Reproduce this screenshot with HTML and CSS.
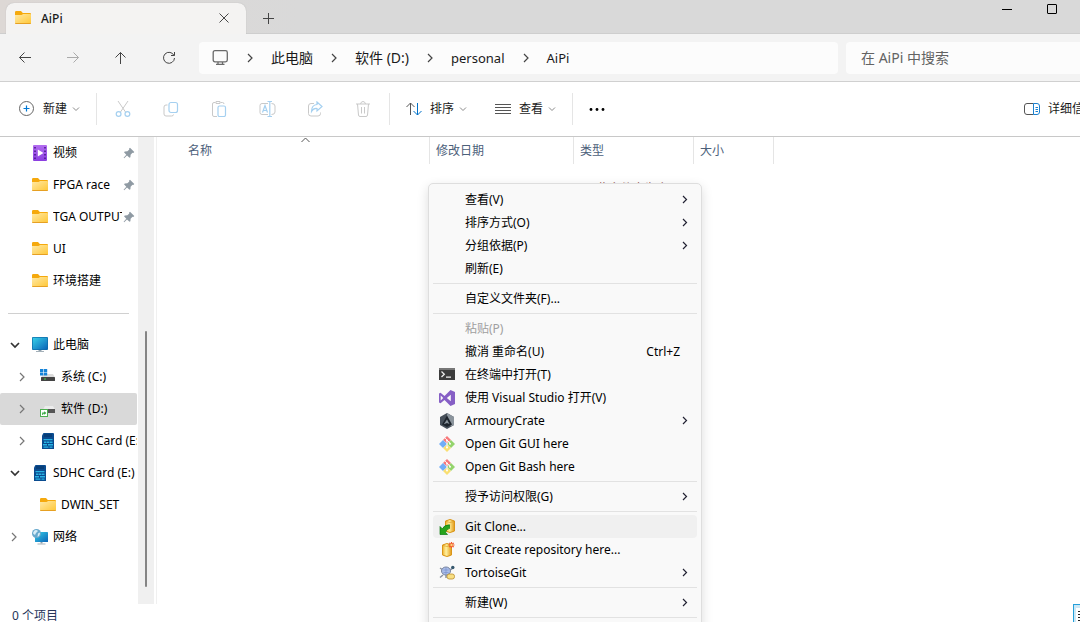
FILE: index.html
```html
<!DOCTYPE html>
<html lang="zh-CN">
<head>
<meta charset="utf-8">
<title>AiPi</title>
<link rel="stylesheet" href="styles.css">
</head>
<body>
<svg class="defs" aria-hidden="true">
  <defs>
    <linearGradient id="gFolder" x1="0" y1="0" x2="1" y2="1"><stop offset="0" stop-color="#ffe9a6"/><stop offset="1" stop-color="#ffc736"/></linearGradient>
    <linearGradient id="gScreen" x1="0" y1="0" x2="1" y2="1"><stop offset="0" stop-color="#37d0e8"/><stop offset="1" stop-color="#0a64b8"/></linearGradient>
    <linearGradient id="gVideo" x1="0" y1="0" x2="0" y2="1"><stop offset="0" stop-color="#b36df0"/><stop offset="1" stop-color="#8a3ee0"/></linearGradient>
    <linearGradient id="gGold" x1="0" y1="0" x2="1" y2="0"><stop offset="0" stop-color="#efb02a"/><stop offset=".4" stop-color="#fff2a0"/><stop offset="1" stop-color="#e39a18"/></linearGradient>
  </defs>
  <symbol id="folder" viewBox="0 0 16 16"><path d="M0 2.200Q0 1 1.200 1H6L7.800 3H15Q16 3 16 4V8H0z" fill="#f5a90d"/><path d="M0 5H6.500L8.200 4H15.200Q16 4 16 4.800V13Q16 13.800 15.200 13.800H.8Q0 13.800 0 13z" fill="url(#gFolder)"/><path d="M0 13H16Q16 14 15 14H1Q0 14 0 13z" fill="#e6a023"/></symbol>
  <symbol id="video" viewBox="0 0 16 16"><rect x="1" width="14" height="16" rx="1" fill="url(#gVideo)"/><path d="M2.200 2h1.600v1.600H2.200zM2.200 5.500h1.600v1.600H2.200zM2.200 9h1.600v1.600H2.200zM2.200 12.500h1.600v1.600H2.200zM12.200 2h1.600v1.600h-1.600zM12.200 5.500h1.600v1.600h-1.600zM12.200 9h1.600v1.600h-1.600zM12.200 12.500h1.600v1.600h-1.600z" fill="#4a1a8c"/><path d="M5.800 4.500 11.500 8 5.800 11.500z" fill="#fff"/></symbol>
  <symbol id="pin" viewBox="0 0 12 12"><path d="M7 .8 11.300 5 10.300 6 9.500 5.800 7.600 7.700 7.400 10.200 6.500 10.800 4 8.500 1.200 11.200.6 10.700 3.300 7.800 1 5.300 1.800 4.500 4.400 4.300 6.300 2.400 6.100 1.600z" fill="#8f9aa3"/></symbol>
  <symbol id="pc" viewBox="0 0 16 16"><path d="M6.500 12h3v2.500h-3z" fill="#8fa0ac"/><path d="M4 14h8v1H4z" fill="#a4b0b8"/><rect y="0" width="16" height="13" rx="1" fill="#0c6aa8"/><rect x=".7" y=".7" width="14.600" height="11.600" fill="url(#gScreen)"/></symbol>
  <symbol id="drive" viewBox="0 0 16 16"><path d="M3.500 5H13L15 8.500H1z" fill="#dcdcdc"/><rect x="1" y="8" width="14" height="4" rx=".6" fill="#444"/><path d="M4 9.500h2v1H4z" fill="#43d64c"/></symbol>
  <symbol id="driveC" viewBox="0 0 16 16"><use href="#drive"/><path d="M0 0h3.300v3H0zM3.900 0h3.300v3H3.900zM0 3.600h3.300v3H0zM3.900 3.600h3.300v3H3.900z" fill="#1583d8"/></symbol>
  <symbol id="driveD" viewBox="0 0 16 16"><path d="M5 5H13L15 8.500H3z" fill="#ececec"/><rect x="5" y="8" width="10" height="4" fill="#555"/><rect x=".5" y="8.500" width="7" height="7" fill="#fff" stroke="#4caf50"/><path d="M2.200 14V11.600H4.200V10.200L6.400 12 4.200 13.700V12.700H3.200V14z" fill="#30a53c"/></symbol>
  <symbol id="sd" viewBox="0 0 16 16"><path d="M3.500 0H13.500L14 .5V16H2V2.500z" fill="#0a4b8f"/><path d="M5 1v3M7 1v3M9 1v3M11 1v3" stroke="#073263"/><path d="M3.500 6h9v1.300h-9zM4 8.500h2.500v1.500H4zM7 8.500h2.500v1.500H7zM10 8.500h2.500v1.500H10zM3 11h4v1.400H3zM8 11h5v1.400H8zM3.500 13.500h5v1.300h-5zM9.500 13.500h3v1.300h-3z" fill="#28b4e4"/></symbol>
  <symbol id="net" viewBox="0 0 16 16"><path d="M8.500 12.500h2v2h-2z" fill="#8fa0ac"/><path d="M5.500 14.500h8v1h-8z" fill="#a4b0b8"/><rect x="3" y="3" width="13" height="10" rx=".6" fill="url(#gScreen)"/><circle cx="4.500" cy="4.500" r="4.500" fill="#68a9cd"/><path d="M2 2Q4 0 6 2L4 4 3 6Q1 5 1 4zM6 4.500 8 3.500Q8 7 5.500 8z" fill="#d7edf7"/></symbol>
  <symbol id="down" viewBox="0 0 8 8"><path d="M1 2.500 4 5.500 7 2.500" fill="none" stroke="#8a8a8a"/></symbol>
  <symbol id="right" viewBox="0 0 8 12"><path d="M2 2 6 6 2 10" fill="none" stroke="currentColor" stroke-width="1.200"/></symbol>
  <symbol id="small" viewBox="0 0 8 12"><path d="M2 2 5.500 5.500 2 9" fill="none" stroke="currentColor" stroke-width="1.200"/></symbol>
  <symbol id="caret" viewBox="0 0 10 10"><path d="M1 3 5 7 9 3" fill="none" stroke="#333" stroke-width="1.700"/></symbol>
  <symbol id="git" viewBox="0 0 16 16"><path d="M8 0 12 4 8 7.500 4 4z" fill="#f8797b"/><path d="M4 4 8 8 4 12 0 8z" fill="#72adf7"/><path d="M12 4 16 8 12 12 8 8z" fill="#94d46c"/><path d="M8 8.500 12 12 8 16 4 12z" fill="#f9df72"/><path d="M5.800 1.800 11 7M8 4.500V11.500" stroke="#fafafa" stroke-width=".9" fill="none"/><circle cx="8" cy="4.500" r=".9" fill="#fff"/><circle cx="11" cy="7.800" r="1" fill="#fff"/><circle cx="8" cy="11.500" r="1" fill="#fff"/></symbol>
  <symbol id="barrel" viewBox="0 0 10 14"><path d="M.5 2Q5-1 9.500 2V12Q5 15 .5 12z" fill="url(#gGold)" stroke="#d9951a"/><path d="M1 2.500Q5 4.500 9 2.500" fill="none" stroke="#d9951a" stroke-width=".6"/></symbol>
</svg>

<div class="window">
  <header class="titlebar">
    <div class="tab">
      <svg class="i16"><use href="#folder"/></svg>
      <span class="tab-title">AiPi</span>
      <button class="plain tab-close" aria-label="关闭标签页"><svg width="10" height="10" viewBox="0 0 10 10"><path d="M.5.5 9.500 9.500M9.500.5.5 9.500" stroke="#333" stroke-width=".9"/></svg></button>
    </div>
    <button class="plain tab-new" aria-label="新标签页"><svg width="11" height="11" viewBox="0 0 11 11"><path d="M5.500 0V11M0 5.500H11" stroke="#444"/></svg></button>
    <div class="caption">
      <button class="plain" aria-label="最小化"><svg width="10" height="10" viewBox="0 0 10 10"><path d="M0 5.500H10" stroke="#000"/></svg></button>
      <button class="plain" aria-label="最大化"><svg width="10" height="10" viewBox="0 0 10 10"><rect x=".5" y=".5" width="9" height="9" rx=".5" fill="none" stroke="#000"/></svg></button>
    </div>
  </header>

  <nav class="navbar">
    <button class="plain nav-btn" aria-label="后退"><svg width="14" height="14" viewBox="0 0 14 14"><path d="M13 6.500H1.500M6.500 1.500 1.500 6.500 6.500 11.500"/></svg></button>
    <button class="plain nav-btn off" aria-label="前进"><svg width="14" height="14" viewBox="0 0 14 14"><path d="M1 6.500H12.500M7.500 1.500 12.500 6.500 7.500 11.500"/></svg></button>
    <button class="plain nav-btn" aria-label="向上"><svg width="14" height="14" viewBox="0 0 14 14"><path d="M6.500 13V1.500M1.500 6.500 6.500 1.500 11.500 6.500"/></svg></button>
    <button class="plain nav-btn" aria-label="刷新"><svg width="14" height="14" viewBox="0 0 14 14"><path d="M12 4.500A5.500 5.500 0 1 0 12.500 7M12.500 1V4.500H9"/></svg></button>
    <div class="address">
      <svg width="17" height="16" viewBox="0 0 17 16"><path d="M3 .7H13.500Q15.300.7 15.300 2.500V10Q15.300 11.800 13.500 11.800H3Q1.200 11.800 1.200 10V2.500Q1.200.7 3 .7zM6 12V14M10.500 12V14M4 14.300H12.500" fill="none" stroke="#6a6a6a" stroke-width="1.300"/></svg>
      <svg class="sep"><use href="#right"/></svg>
      <button class="plain">此电脑</button>
      <svg class="sep"><use href="#right"/></svg>
      <button class="plain">软件 (D:)</button>
      <svg class="sep"><use href="#right"/></svg>
      <button class="plain latin">personal</button>
      <svg class="sep"><use href="#right"/></svg>
      <button class="plain latin">AiPi</button>
    </div>
    <input class="search" type="text" aria-label="搜索" placeholder="在 AiPi 中搜索">
  </nav>

  <div class="toolbar">
    <button class="plain tool new"><svg width="16" height="16" viewBox="0 0 16 16"><circle cx="7.500" cy="7.500" r="7" fill="none" stroke="#666"/><path d="M7.500 4.500V10.500M4.500 7.500H10.500" stroke="#0078d4" stroke-width="1.200"/></svg>新建<svg class="i8"><use href="#down"/></svg></button>
    <span class="rule"></span>
    <div class="group">
      <button class="plain" aria-label="剪切" disabled><svg width="16" height="16" viewBox="0 0 16 16"><path d="M3 0 10.500 11M13 0 5.500 11" class="g"/><circle cx="3.600" cy="13" r="2.400" class="b"/><circle cx="12.400" cy="13" r="2.400" class="b"/></svg></button>
      <button class="plain" aria-label="复制" disabled><svg width="16" height="16" viewBox="0 0 16 16"><path d="M4.500 4H3Q1 4 1 6V13Q1 15 3 15H8.500Q10.500 15 10.500 13.500" class="g"/><rect x="6" y="1.500" width="8.500" height="10" rx="2" class="b"/></svg></button>
      <button class="plain" aria-label="粘贴" disabled><svg width="16" height="16" viewBox="0 0 16 16"><path d="M6 15.500H3Q1.500 15.500 1.500 14V3Q1.500 1.500 3 1.500H4.500M9.500 1.500H11.500Q13 1.500 13 3M5 .5H9V2.500H5z" class="g"/><rect x="7" y="5" width="7.500" height="10.500" rx="1.500" class="b"/></svg></button>
      <button class="plain" aria-label="重命名" disabled><svg width="18" height="16" viewBox="0 0 18 16"><path d="M10 2.500H4Q2 2.500 2 4.500V11.500Q2 13.500 4 13.500H10M13.500 2.500Q17 2.500 17 5V11Q17 13.500 13.500 13.500" class="g"/><path d="M4.500 11.500 7 4.500 9.500 11.500M5.500 9.500H8.500M9.500.5H14M11.800.5V15.500M9.500 15.500H14" class="b"/></svg></button>
      <button class="plain" aria-label="共享" disabled><svg width="16" height="16" viewBox="0 0 16 16"><path d="M7 2.500H4Q1.500 2.500 1.500 5V12.500Q1.500 15 4 15H11Q13.500 15 13.500 12.500V11.500" class="g"/><path d="M10 1 15 5.500 10 10V7.500Q6.500 7 4.500 10.500 4.500 4 10 3.500z" class="b"/></svg></button>
      <button class="plain" aria-label="删除" disabled><svg width="16" height="16" viewBox="0 0 16 16"><path d="M1 3H15M2.500 3 3.500 14Q3.600 15.500 5 15.500H11Q12.400 15.500 12.500 14L13.500 3M5.500 3Q6 .5 8 .5T10.500 3M6.500 6V12.500M9.500 6V12.500" class="g"/></svg></button>
    </div>
    <span class="rule"></span>
    <button class="plain tool sort"><svg width="16" height="14" viewBox="0 0 16 14"><path d="M4.500 13V1M.5 5 4.500 1 8.500 5" fill="none" stroke="#555"/><path d="M11.500 1V13M7.500 9 11.500 13 15.500 9" fill="none" stroke="#0071c8"/></svg>排序<svg class="i8"><use href="#down"/></svg></button>
    <button class="plain tool view"><svg width="16" height="12" viewBox="0 0 16 12"><path d="M0 1.500H16M0 4.500H16M0 7.500H16M0 10.500H16" stroke="#555"/></svg>查看<svg class="i8"><use href="#down"/></svg></button>
    <span class="rule"></span>
    <button class="plain more" aria-label="更多"><svg width="16" height="4" viewBox="0 0 16 4"><circle cx="2" cy="2.500" r="1.400"/><circle cx="8" cy="2.500" r="1.400"/><circle cx="14" cy="2.500" r="1.400"/></svg></button>
    <button class="plain tool details"><svg width="16" height="12" viewBox="0 0 16 12"><path d="M9.500.5H3Q.5.500.5 3V9Q.5 11.500 3 11.500H9.500" fill="none" stroke="#555"/><path d="M9.500.5H13Q15.500.5 15.500 3V9Q15.500 11.500 13 11.500H9.500zM11.500 4.500H14M11.500 6.500H14M11.500 8.500H14" fill="none" stroke="#1a80d0"/></svg>详细信息</button>
  </div>

  <div class="body">
    <aside class="side">
      <ul class="tree">
        <li><a href="#" class="row l1"><svg class="i16"><use href="#video"/></svg><span class="name">视频</span><svg class="pin"><use href="#pin"/></svg></a></li>
        <li><a href="#" class="row l1"><svg class="i16"><use href="#folder"/></svg><span class="name">FPGA race</span><svg class="pin"><use href="#pin"/></svg></a></li>
        <li><a href="#" class="row l1"><svg class="i16"><use href="#folder"/></svg><span class="name">TGA OUTPUT</span><svg class="pin"><use href="#pin"/></svg></a></li>
        <li><a href="#" class="row l1"><svg class="i16"><use href="#folder"/></svg><span class="name">UI</span></a></li>
        <li><a href="#" class="row l1"><svg class="i16"><use href="#folder"/></svg><span class="name">环境搭建</span></a></li>
        <li class="split"></li>
        <li><a href="#" class="row open"><svg class="i10"><use href="#caret"/></svg><svg class="i16"><use href="#pc"/></svg><span class="name">此电脑</span></a></li>
        <li><a href="#" class="row child"><svg class="arrow"><use href="#right"/></svg><svg class="i16"><use href="#driveC"/></svg><span class="name">系统 (C:)</span></a></li>
        <li><a href="#" class="row child current"><svg class="arrow"><use href="#right"/></svg><svg class="i16"><use href="#driveD"/></svg><span class="name">软件 (D:)</span></a></li>
        <li><a href="#" class="row child"><svg class="arrow"><use href="#right"/></svg><svg class="i16"><use href="#sd"/></svg><span class="name">SDHC Card (E:)</span></a></li>
        <li><a href="#" class="row open"><svg class="i10"><use href="#caret"/></svg><svg class="i16"><use href="#sd"/></svg><span class="name">SDHC Card (E:)</span></a></li>
        <li><a href="#" class="row l2"><svg class="i16"><use href="#folder"/></svg><span class="name">DWIN_SET</span></a></li>
        <li><a href="#" class="row open"><svg class="arrow"><use href="#right"/></svg><svg class="i16"><use href="#net"/></svg><span class="name">网络</span></a></li>
      </ul>
      <div class="track"><div class="thumb"></div></div>
    </aside>
    <main class="files">
      <div class="columns">
        <button class="plain col c-name">名称<svg class="asc" width="9" height="6" viewBox="0 0 9 6"><path d="M.5 5 4.500 1 8.500 5" fill="none" stroke="#555"/></svg></button>
        <button class="plain col c-date">修改日期</button>
        <button class="plain col c-type">类型</button>
        <button class="plain col c-size">大小</button>
      </div>
      <p class="empty">此文件夹为空。</p>
    </main>
  </div>

  <footer class="status">
    <span class="count">0 个项目</span>
    <button class="plain layout" aria-label="详细信息视图"><svg width="8" height="14" viewBox="0 0 8 14"><path d="M0 0H8V14H0z" fill="#fff"/><path d="M2 3.500H8M2 6.500H8M2 9.500H8M2 12.500H8" stroke="#222" stroke-dasharray="2 1"/></svg></button>
  </footer>

  <div class="menu" role="menu">
    <button class="plain item" role="menuitem"><span class="ico"></span><span class="label">查看(V)</span><svg class="sub"><use href="#small"/></svg></button>
    <button class="plain item" role="menuitem"><span class="ico"></span><span class="label">排序方式(O)</span><svg class="sub"><use href="#small"/></svg></button>
    <button class="plain item" role="menuitem"><span class="ico"></span><span class="label">分组依据(P)</span><svg class="sub"><use href="#small"/></svg></button>
    <button class="plain item" role="menuitem"><span class="ico"></span><span class="label">刷新(E)</span></button>
    <hr>
    <button class="plain item" role="menuitem"><span class="ico"></span><span class="label">自定义文件夹(F)...</span></button>
    <hr>
    <button class="plain item" role="menuitem" disabled><span class="ico"></span><span class="label">粘贴(P)</span></button>
    <button class="plain item" role="menuitem"><span class="ico"></span><span class="label">撤消 重命名(U)</span><span class="key">Ctrl+Z</span></button>
    <button class="plain item" role="menuitem"><svg class="ico" viewBox="0 0 16 16"><path d="M0 1H16V13H0z" fill="#3c3c3c"/><path d="M0 1H16V3H0z" fill="#777"/><path d="M2.500 4.500 5.300 7.300 2.500 10M7 10.200H12" fill="none" stroke="#eee" stroke-width="1.300"/></svg><span class="label">在终端中打开(T)</span></button>
    <button class="plain item" role="menuitem"><svg class="ico" viewBox="0 0 16 16"><path d="M11.500 0 16 2V14L11.500 16 5.500 10 1.500 13.200 0 12.500V3.500L1.500 2.800 5.500 6zM11.800 4.800 7.800 8 11.800 11.200zM1.700 5.500V10.500L4.200 8z" fill="#865fc5" fill-rule="evenodd"/></svg><span class="label">使用 Visual Studio 打开(V)</span></button>
    <button class="plain item" role="menuitem"><svg class="ico" viewBox="0 0 16 16"><path d="M8 0 15 4V12L8 16 1 12V4z" fill="#47505a"/><path d="M8 0 15 4V12L12 13.500 8 3z" fill="#8b949c"/><path d="M8 2.500 13 11.500 8 14 3 11.500z" fill="#1d242c"/><path d="M8 6.500 10.500 11 8 10 4.800 11.300z" fill="#8a949c"/></svg><span class="label">ArmouryCrate</span><svg class="sub"><use href="#small"/></svg></button>
    <button class="plain item" role="menuitem"><svg class="ico"><use href="#git"/></svg><span class="label">Open Git GUI here</span></button>
    <button class="plain item" role="menuitem"><svg class="ico"><use href="#git"/></svg><span class="label">Open Git Bash here</span></button>
    <hr>
    <button class="plain item" role="menuitem"><span class="ico"></span><span class="label">授予访问权限(G)</span><svg class="sub"><use href="#small"/></svg></button>
    <hr>
    <button class="plain item hover" role="menuitem"><svg class="ico" viewBox="0 0 16 16"><use href="#barrel" x="6" y="0" width="10" height="14"/><path d="M1 7.500V15.500H8.500L6.500 13.300Q7.500 9.800 10.500 9.500V5.800Q5 6 3.300 9.800z" fill="#27a41c" stroke="#0c7a10" stroke-width=".7"/></svg><span class="label">Git Clone...</span></button>
    <button class="plain item" role="menuitem"><svg class="ico" viewBox="0 0 16 16"><use href="#barrel" x="3" y="1" width="10" height="14"/><path d="M12.500 0V6M9.500 3H15.500M10.300.8 14.700 5.200M14.700.8 10.300 5.200" stroke="#f0562a" stroke-width="1.200"/><circle cx="12.500" cy="3" r="1.200" fill="#ffd37a"/></svg><span class="label">Git Create repository here...</span></button>
    <button class="plain item" role="menuitem"><svg class="ico" viewBox="0 0 16 16"><path d="M1 3 4 5M1 12.500 4 10M7 10V13M10 5 13 4" stroke="#8b93a2" stroke-width="1.500"/><ellipse cx="7" cy="6" rx="4.500" ry="4" fill="#a9bdea" stroke="#77839f"/><path d="M4.500 5H9.500M4.500 7.500H9.500M7 3V9" stroke="#7c92cd" stroke-width=".7"/><circle cx="13.800" cy="2.500" r="1.700" fill="#35576d"/><rect x="8" y="9" width="7.500" height="5" rx="2.200" fill="#f8df83" stroke="#b98c2b" stroke-width=".8"/></svg><span class="label">TortoiseGit</span><svg class="sub"><use href="#small"/></svg></button>
    <hr>
    <button class="plain item" role="menuitem"><span class="ico"></span><span class="label">新建(W)</span><svg class="sub"><use href="#small"/></svg></button>
    <hr>
  </div>
</div>
</body>
</html>
```
FILE: styles.css
```css
* { box-sizing: border-box; }

body {
  margin: 0;
  color: #1a1a1a;
  font: 12px/16px "Noto Sans", "Noto Sans CJK SC", sans-serif;
}

svg { display: block; flex: none; }
.defs { position: absolute; width: 0; height: 0; }

.plain {
  display: flex;
  align-items: center;
  margin: 0;
  padding: 0;
  border: 0;
  background: none;
  color: inherit;
  font: inherit;
  white-space: nowrap;
}

.i8 { width: 8px; height: 8px; }
.i10 { width: 10px; height: 10px; }
.i16 { width: 16px; height: 16px; }

.window {
  position: relative;
  display: flex;
  flex-direction: column;
  height: 100vh;
  overflow: hidden;
  background: #fff;
}

/* Title bar */
.titlebar {
  display: flex;
  flex: none;
  height: 34px;
  padding-left: 6px;
  border-bottom: 1px solid #cecece;
  background: linear-gradient(90deg, #ddd8d5, #d9d9d9 300px);
}

.tab {
  display: flex;
  align-items: center;
  width: 240px;
  height: 31px;
  margin-top: 3px;
  padding: 0 17px 2px 9px;
  border-radius: 8px 8px 0 0;
  background: #f4f3f2;
  box-shadow: 0 0 1px #aaa;
}

.tab-title { margin-left: 10px; padding-top: 2px; font-weight: 500; }
.tab-close { margin-left: auto; }
.tab-new { margin-left: 17px; padding-top: 4px; }

.caption {
  display: flex;
  gap: 35px;
  align-items: flex-start;
  margin: 4px 23px 0 auto;
}

/* Navigation */
.navbar {
  display: flex;
  flex: none;
  height: 48px;
  padding: 8px 0 7px 1px;
  border-bottom: 1px solid #d0d0d0;
  background: #f3f3f3;
}

.nav-btn { justify-content: center; width: 48px; }
.nav-btn path { fill: none; stroke: #444; }
.nav-btn.off path { stroke: #aaa; }

.address {
  display: flex;
  flex: 1;
  gap: 17px;
  align-items: center;
  min-width: 0;
  margin: 0 8px 0 6px;
  padding-left: 13px;
  border-radius: 4px;
  background: #fcfcfc;
  font-size: 14px;
}

.address .sep { width: 8px; height: 12px; color: #444; }
.address .latin { font-size: 13px; }

.search {
  width: 234px;
  padding: 0 15px;
  border: 0;
  border-radius: 4px 0 0 4px;
  background: #fcfcfc;
  font: inherit;
  font-size: 14px;
}

.search::placeholder { color: #636363; opacity: 1; }

/* Command bar */
.toolbar {
  display: flex;
  flex: none;
  align-items: center;
  height: 55px;
  padding-left: 19px;
  border-bottom: 1px solid #c8c8c8;
}

.tool { gap: 8px; }
.new { width: 77px; }
.rule { flex: none; width: 1px; height: 32px; background: #e5e5e5; }
.group { display: flex; margin: 0 2px; }
.group .plain { justify-content: center; width: 48px; height: 32px; }
.group .g { fill: none; stroke: #c9c9c9; }
.group .b { fill: none; stroke: #a5d0f0; stroke-width: 1.2; }
.sort { width: 89px; padding-left: 16px; }
.view { width: 93px; padding-left: 16px; }
.more { margin-left: 16px; }
.details { margin: 0 -16px 0 auto; }

.tool .i8 { margin-left: -3px; }

/* Body */
.body { display: flex; flex: 1; min-height: 0; }

.side { display: flex; flex: none; width: 157px; border-right: 1px solid #f0f0f0; color: #000; }

.tree {
  width: 138px;
  margin: 0;
  padding: 0 1px 0 0;
  list-style: none;
  overflow: hidden;
}

.row {
  display: flex;
  align-items: center;
  height: 32px;
  color: inherit;
  text-decoration: none;
}

.row .name { flex: 1; margin-left: 5px; overflow: hidden; white-space: nowrap; }
.l1 { padding-left: 32px; }
.l2 { padding-left: 40px; }
.open { padding-left: 10px; }
.open .i16 { margin-left: 12px; }
.open .arrow { margin-right: 2px; }
.child { padding-left: 18px; }
.child .i16 { margin-left: 14px; }
.current { border-radius: 2px; background: #d9d9d9; }
.arrow { width: 8px; height: 12px; color: #777; }
.pin { width: 12px; height: 12px; margin: 0 2px 0 1px; }

.split { height: 32px; padding: 16px 8px 0; }
.split::before { content: ""; display: block; height: 1px; background: #d0d0d0; }

.track {
  display: flex;
  align-items: flex-end;
  justify-content: center;
  width: 16px;
  padding-bottom: 17px;
  background: #f0f0f0;
}

.thumb { width: 2px; height: 57%; border-radius: 1px; background: #858585; }

.files { flex: 1; min-width: 0; }

.columns { display: flex; height: 27px; color: #4c607a; }

.col {
  position: relative;
  padding-left: 6px;
  border-right: 1px solid #e5e5e5;
}

.c-name { width: 273px; padding-left: 31px; }
.c-date { width: 144px; }
.c-type { width: 120px; }
.c-size { width: 80px; }

.asc { position: absolute; top: 0; left: 144px; }

.empty { margin: 17px 0 0; padding-left: 40px; color: #a0625a; text-align: center; }

/* Status bar */
.status {
  display: flex;
  flex: none;
  justify-content: space-between;
  height: 18px;
  padding-left: 12px;
  color: #26355a;
}

.count { padding-top: 4px; }

.layout {
  width: 7px;
  padding: 3px 0 0 2px;
  border: solid #26a0da;
  border-width: 1px 0 0 1px;
  background: #cce8f6;
  overflow: hidden;
}

/* Context menu */
.menu {
  position: absolute;
  top: 183px;
  left: 428px;
  width: 274px;
  padding: 4px 4px 24px;
  border: 1px solid #dedede;
  border-radius: 5px;
  background: #f9f9f9;
  box-shadow: 0 4px 12px rgba(0, 0, 0, .14);
  color: #000;
}

.item {
  width: 100%;
  height: 23px;
  padding: 0 8px 0 6px;
  border-radius: 4px;
}

.item:disabled { color: #a0a0a0; }
.item.hover { background: #f0f0f0; }
.ico { flex: none; width: 16px; height: 16px; }
.label { margin: 0 auto 0 10px; }
.key { margin-right: 9px; }
.sub { width: 8px; height: 12px; color: #223; }

.menu hr {
  height: 1px;
  margin: 3px 0;
  border: 0;
  background: #e2e2e2;
}
```
